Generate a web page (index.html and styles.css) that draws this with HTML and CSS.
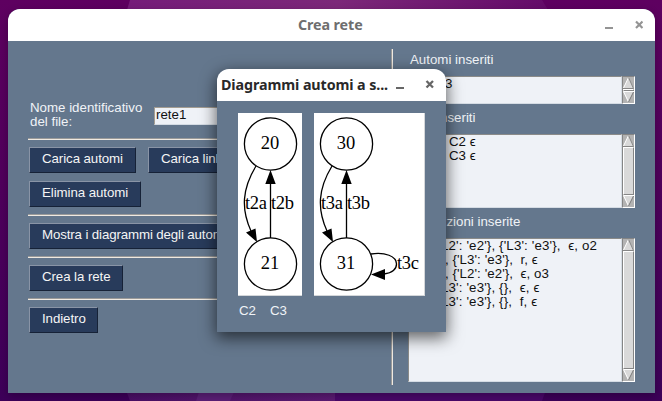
FILE: index.html
```html
<!DOCTYPE html>
<html lang="it">
<head>
<meta charset="utf-8">
<title>Crea rete</title>
<link rel="stylesheet" href="styles.css">
</head>
<body>
<svg class="wallpaper" width="662" height="401" viewBox="0 0 662 401">
  <defs>
    <linearGradient id="top" x1="0" x2="1"><stop offset="0" stop-color="#751c79"/><stop offset=".5" stop-color="#7c2879"/><stop offset="1" stop-color="#640b69"/></linearGradient>
    <linearGradient id="bottom" x1="0" x2="1"><stop offset="0" stop-color="#4b0f66"/><stop offset="1" stop-color="#5b1b73"/></linearGradient>
  </defs>
  <path d="M130 0H542L548 10H127Z" fill="url(#top)"/>
  <path d="M126 390H335V401H130Z" fill="url(#bottom)"/>
  <path d="M199 392H234L230 401H196Z" fill="#5b1f77"/>
  <path d="M335 390H546L542 401H335Z" fill="#4a086a"/>
</svg>
<main class="window">
  <header class="titlebar"><h1 class="title">Crea rete</h1>
    <svg class="controls" width="38" height="12" viewBox="0 0 38 12"><path d="M0 9H8" stroke="#949494" stroke-width="2"/><path d="M31 2.500l6.500 6.500M37.500 2.500l-6.500 6.500" stroke="#949494" stroke-width="2.200"/></svg>
  </header>
  <div class="content">
    <section class="form">
      <div class="field"><label for="name">Nome identificativo<br>del file:</label><input id="name" value="rete1"></div>
      <hr>
      <div class="actions"><button class="load">Carica automi</button><button class="link">Carica link</button></div>
      <div class="actions"><button class="delete">Elimina automi</button></div>
      <hr>
      <div class="actions"><button class="show">Mostra i diagrammi degli automi</button></div>
      <hr>
      <div class="actions"><button class="create">Crea la rete</button></div>
      <hr>
      <div class="actions"><button class="back">Indietro</button></div>
    </section>
    <div class="divider"></div>
    <section class="lists">
      <h2>Automi inseriti</h2>
      <div class="list automata"><div class="rows"><p class="a1">3</p></div>
        <div class="scroll"><svg width="11" height="12" viewBox="0 0 11 12"><path d="M5.5 .5L0 11.5H11Z" fill="#d9d9d9"/><path d="M5.5 .5L.5 11" stroke="#fff"/><path d="M5.5 .5L10.5 11.500H0" fill="none" stroke="#858585"/></svg><i></i><svg width="11" height="12" viewBox="0 0 11 12"><path d="M0 .5H11L5.5 11.5Z" fill="#d9d9d9"/><path d="M11 .5H.5L5.5 11" fill="none" stroke="#fff"/><path d="M10.5 1L5.5 11" stroke="#777"/></svg></div></div>
      <h2 class="links-title">Link inseriti</h2>
      <div class="list links"><div class="rows"><p class="b1">C2 ϵ</p><p class="b1">C3 ϵ</p></div>
        <div class="scroll"><svg width="11" height="12" viewBox="0 0 11 12"><path d="M5.5 .5L0 11.5H11Z" fill="#d9d9d9"/><path d="M5.5 .5L.5 11" stroke="#fff"/><path d="M5.5 .5L10.5 11.500H0" fill="none" stroke="#858585"/></svg><i></i><svg width="11" height="12" viewBox="0 0 11 12"><path d="M0 .5H11L5.5 11.5Z" fill="#d9d9d9"/><path d="M11 .5H.5L5.5 11" fill="none" stroke="#fff"/><path d="M10.5 1L5.5 11" stroke="#777"/></svg></div></div>
      <h2 class="transitions-title">Transizioni inserite</h2>
      <div class="list transitions"><div class="rows"><p class="c1">L2': 'e2'}, {'L3': 'e3'},  ϵ, o2</p><p class="c2">, {'L3': 'e3'},  r, ϵ</p><p class="c2">, {'L2': 'e2'},  ϵ, o3</p><p class="c1">L3': 'e3'}, {},  ϵ, ϵ</p><p class="c1">L3': 'e3'}, {},  f, ϵ</p></div>
        <div class="scroll"><svg width="11" height="12" viewBox="0 0 11 12"><path d="M5.5 .5L0 11.5H11Z" fill="#d9d9d9"/><path d="M5.5 .5L.5 11" stroke="#fff"/><path d="M5.5 .5L10.5 11.500H0" fill="none" stroke="#858585"/></svg><i></i><svg width="11" height="12" viewBox="0 0 11 12"><path d="M0 .5H11L5.5 11.5Z" fill="#d9d9d9"/><path d="M11 .5H.5L5.5 11" fill="none" stroke="#fff"/><path d="M10.5 1L5.5 11" stroke="#777"/></svg></div></div>
    </section>
  </div>
</main>
<aside class="dialog">
  <header class="dialog-bar"><h2>Diagrammi automi a s...</h2>
    <svg class="dialog-controls" width="42" height="12" viewBox="0 0 42 12"><path d="M0 9H8" stroke="#666" stroke-width="2"/><path d="M30.500 2l6.500 6.500M37 2l-6.500 6.500" stroke="#666" stroke-width="2.300"/></svg>
  </header>
  <div class="diagrams">
    <svg width="64" height="183" viewBox="0 0 64 183">
      <g fill="none" stroke="#000" stroke-width="1.300"><circle cx="32.500" cy="31" r="26.100"/><circle cx="32.500" cy="151" r="26.100"/><path d="M18 53C4 76 3 96 13 118M32.500 125V70"/></g>
      <path d="M27.300 71L32.500 57L37.700 71ZM8 119.500L17.500 115.500L19 129Z"/>
      <g class="state"><text x="32" y="35.700">20</text><text x="32" y="155.700">21</text></g>
      <g class="edge"><text x="7" y="95.700" textLength="22">t2a</text><text x="33" y="95.700" textLength="23">t2b</text></g>
    </svg>
    <svg width="111" height="183" viewBox="0 0 111 183">
      <g fill="none" stroke="#000" stroke-width="1.300"><circle cx="32.500" cy="31" r="26.100"/><circle cx="32.500" cy="151" r="26.100"/><path d="M18 53C4 76 3 96 13 118M32.500 125V70M57 141C71 139 82.500 143 82.500 151C82.500 157 77 160 70 161"/></g>
      <path d="M27.300 71L32.500 57L37.700 71ZM8 119.500L17.500 115.500L19 129ZM71 156L57 161.500L71 167Z"/>
      <g class="state"><text x="32" y="35.700">30</text><text x="32" y="155.700">31</text></g>
      <g class="edge"><text x="7" y="95.700" textLength="22">t3a</text><text x="33" y="95.700" textLength="23">t3b</text><text x="83" y="155.700" textLength="22">t3c</text></g>
    </svg>
  </div>
  <div class="captions"><span>C2</span><span>C3</span></div>
</aside>
</body>
</html>
```

FILE: styles.css
```css
* { box-sizing: border-box; }
body { margin: 0; width: 662px; height: 401px; padding: 9px 7px 8px 8px; overflow: hidden; position: relative; font: 13.3px/14px "Liberation Sans", sans-serif; color: #f0f3f7; background: linear-gradient(#5e0060, #50005c 45%, #3d0059); }
h1, h2, p { margin: 0; font-weight: normal; }
.wallpaper { position: absolute; left: 0; top: 0; }
.window { position: relative; width: 647px; height: 384px; border-radius: 12px 12px 0 0; background: #64778d; box-shadow: 0 3px 8px #0004; overflow: hidden; }
.titlebar { height: 32px; background: #fff; display: flex; align-items: center; justify-content: space-between; padding: 0 13px 0 290px; }
.title { font: bold 14.3px/20px "Noto Sans", sans-serif; color: #6e6e6e; letter-spacing: -.1px; }
.controls { margin-right: -1px; }
.content { display: flex; height: 352px; padding: 8px 20px; }
.form { width: 363px; overflow: hidden; padding-top: 52px; }
.field { display: flex; height: 37px; gap: 8px; padding-left: 2px; }
.field label { width: 116px; white-space: nowrap; }
input { width: 200px; height: 18px; margin-top: 6px; padding: 0 1px 3px; border: 1px solid; border-color: #a49d92 #d5dce4 #d5dce4 #a49d92; background: #eff2f7; color: #111; font: inherit; border-radius: 0; }
hr { height: 2px; margin: 0 0 7px; border: 0; border-top: 1px solid #9a9a99; background: #efe9e1; }
.actions { display: flex; gap: 12px; padding-left: 1px; height: 26px; margin-bottom: 8px; }
.actions:has(+ hr) { margin-bottom: 7px; }
button { height: 26px; padding: 0 0 2px 12px; border: 1px solid; border-color: #8994a6 #162237 #162237 #8994a6; background: #283b5b; color: #f5f5f5; font: inherit; text-align: left; letter-spacing: -.08px; border-radius: 0; white-space: nowrap; }
.load { width: 107px; }
.link { width: 92px; }
.delete { width: 112px; }
.show { width: 214px; letter-spacing: -.13px; }
.create { width: 94px; }
.back { width: 69px; }
.divider { width: 2px; height: 336px; border-left: 1px solid #9a9a99; background: #efe9e1; }
.lists { width: 227px; margin-left: 15px; padding-top: 4px; }
.lists h2 { font-size: 13.3px; line-height: 14px; padding-left: 2px; height: 23px; }
.lists .links-title, .lists .transitions-title { margin-top: 7px; }
.lists .links-title { padding-left: 1px; }
.list { display: flex; background: #eff2f7; color: #111; }
.automata { height: 28px; }
.links { height: 74px; }
.transitions { height: 144px; }
.rows { width: 214px; overflow: hidden; border: 1px solid; border-color: #8b8b89 #d5dce4 #d5dce4 #8b8b89; white-space: pre; }
.a1, .c2 { padding-left: 36px; }
.c2 { letter-spacing: .06px; }
.b1 { padding-left: 40px; }
.c1 { padding-left: 32px; letter-spacing: .14px; }
.scroll { width: 13px; display: flex; flex-direction: column; background: #b3b3b3; border: 1px solid; border-color: #858585 #fff #fff #858585; }
.scroll svg { display: block; flex: none; }
.scroll i { flex: 1; border: 1px solid; border-color: #fff #858585 #858585 #fff; background: #d9d9d9; min-height: 2px; }
.dialog { position: absolute; left: 217px; top: 69px; width: 229px; height: 263px; border-radius: 12px 12px 0 0; background: #64778d; box-shadow: 0 5px 16px 1px #0009; }
.dialog-bar { height: 32px; padding: 0 7px 0 4px; display: flex; align-items: center; background: #fff; border-radius: 12px 12px 0 0; }
.dialog-bar h2 { width: 175px; white-space: nowrap; font: bold 14.3px/20px "Noto Sans", sans-serif; color: #292929; letter-spacing: -.1px; }
.diagrams { display: flex; gap: 12px; padding: 12px 21px 0; }
.diagrams svg { display: block; background: #fff; box-shadow: inset 0 -1px #d4d7da; }
.diagrams svg + svg { box-shadow: inset -1px -1px #d4d7da; }
.state, .edge { font-family: "Liberation Serif", serif; font-size: 18.500px; }
.state { text-anchor: middle; }
.captions { display: flex; gap: 14px; padding: 8px 22px; }
```
